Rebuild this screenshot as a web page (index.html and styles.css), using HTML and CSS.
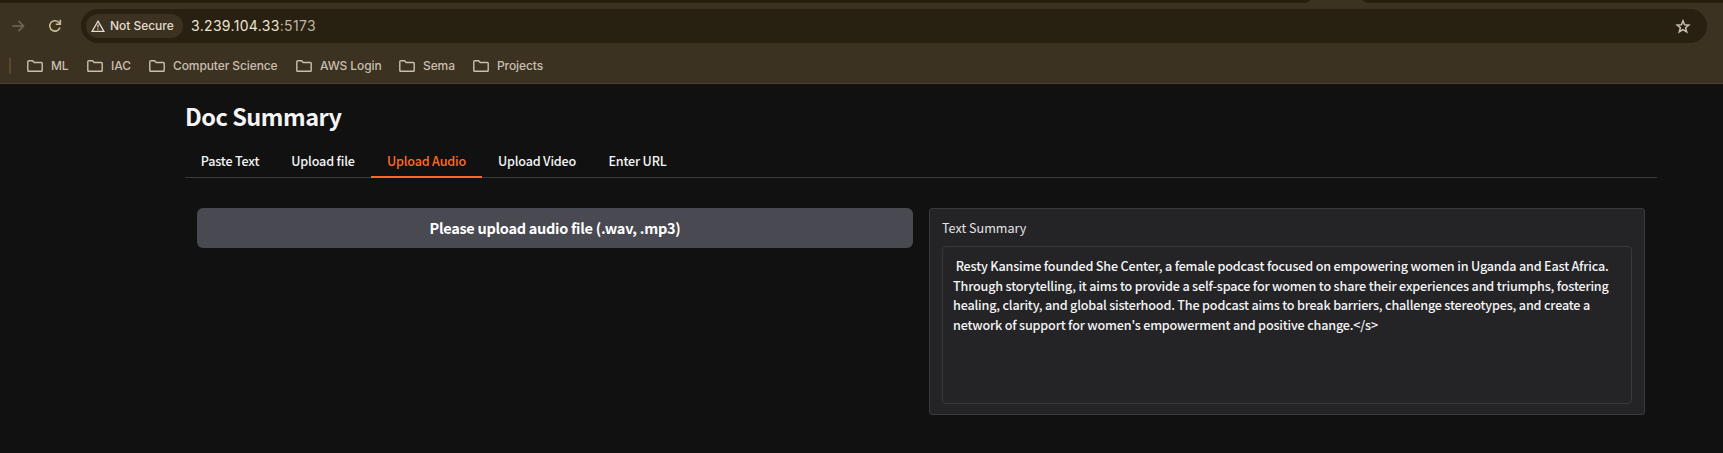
FILE: index.html
```html
<!DOCTYPE html>
<html lang="en">
<head>
<meta charset="utf-8">
<title>Doc Summary</title>
<link rel="stylesheet" href="styles.css">
</head>
<body>
<svg class="defs" width="0" height="0"><defs>
<symbol id="folder" viewBox="0 0 16 12"><path d="M1.4.8h4.2l1.6 1.7h7.2q.8 0 .8.8v7.1q0 .8-.8.8H1.6q-.8 0-.8-.8V1.6q0-.8.8-.8z" fill="none" stroke="currentColor" stroke-width="1.4"/></symbol>
</defs></svg>
<header class="browser">
<div class="tabstrip"><div class="strip left"></div><div class="strip right"></div></div>
<div class="toolbar">
<svg class="forward" width="13" height="12" viewBox="0 0 13 12"><path d="M.3 6h11M6.5.9 11.6 6 6.5 11.1" fill="none" stroke="currentColor" stroke-width="1.5"/></svg>
<svg class="reload" width="14" height="14" viewBox="0 0 14 14"><path d="M11.9 8.4A5.2 5.2 0 1 1 10.6 3.2L12.3 5" fill="none" stroke="currentColor" stroke-width="1.6"/><path d="M12.3.8V5.2H7.8" fill="none" stroke="currentColor" stroke-width="1.6"/></svg>
<div class="address">
<div class="chip"><svg width="14" height="12" viewBox="0 0 14 12"><path d="M7 1.2 12.9 11.3H1.1z" fill="none" stroke="currentColor" stroke-width="1.3"/><path d="M7 4.4v3.2M7 8.5v1.3" stroke="currentColor" stroke-width="1.2"/></svg><span class="t secure">Not Secure</span></div>
<span class="t url">3.239.104.33<span class="port">:5173</span></span>
<svg class="star" width="16" height="15" viewBox="0 0 16 15"><path d="M8 1.8 9.6 5.7 13.8 6 10.6 8.7 11.7 12.9 8 10.6 4.3 12.9 5.4 8.7 2.2 6 6.4 5.7z" fill="none" stroke="currentColor" stroke-width="1.5"/></svg>
</div>
</div>
<nav class="bookmarks">
<i class="divider"></i>
<a class="bm ml"><svg><use href="#folder"/></svg><span>ML</span></a>
<a class="bm iac"><svg><use href="#folder"/></svg><span>IAC</span></a>
<a class="bm cs"><svg><use href="#folder"/></svg><span>Computer Science</span></a>
<a class="bm aws"><svg><use href="#folder"/></svg><span>AWS Login</span></a>
<a class="bm sema"><svg><use href="#folder"/></svg><span>Sema</span></a>
<a class="bm proj"><svg><use href="#folder"/></svg><span>Projects</span></a>
</nav>
</header>
<main class="app">
<h1 class="title">Doc Summary</h1>
<nav class="tabs">
<button class="tab paste">Paste Text</button>
<button class="tab file">Upload file</button>
<button class="tab audio selected">Upload Audio</button>
<button class="tab video">Upload Video</button>
<button class="tab link">Enter URL</button>
</nav>
<section class="row">
<button class="upload"><span>Please upload audio file (.wav, .mp3)</span></button>
<div class="panel">
<label class="label">Text Summary</label>
<div class="output"><p class="line first">&nbsp;Resty Kansime founded She Center, a female podcast focused on empowering women in Uganda and East Africa.</p><p class="line">Through storytelling, it aims to provide a self-space for women to share their experiences and triumphs, fostering</p><p class="line">healing, clarity, and global sisterhood. The podcast aims to break barriers, challenge stereotypes, and create a</p><p class="line">network of support for women's empowerment and positive change.&lt;/s&gt;</p></div>
</div>
</section>
</main>
</body>
</html>
```
FILE: styles.css
```css
* { box-sizing: border-box; }
body { margin: 0; height: 453px; overflow: hidden; background: #111; font-family: "Noto Sans CJK SC", "Noto Sans", sans-serif; color: #f4f4f5; }
.defs { display: block; }
button { border: 0; padding: 0; background: none; font: inherit; color: inherit; }
.browser { height: 84px; background: #3b3222; border-bottom: 1px solid #484033; font-family: Inter, sans-serif; color: #c9bfae; }
.tabstrip { height: 3px; display: flex; justify-content: space-between; }
.strip { background: #281e0e; height: 3px; }
.left { width: 1310px; border-bottom-right-radius: 6px 3px; }
.right { width: 360px; border-bottom-left-radius: 6px 3px; }
.toolbar { display: flex; align-items: center; height: 46px; }
.forward { margin-left: 12px; color: #736956; }
.reload { margin-left: 23px; color: #cdbd96; }
.address { display: flex; align-items: center; width: 1626px; height: 34px; margin-left: 19px; padding: 0 16px 0 5px; border-radius: 17px; background: #282010; }
.chip { display: flex; align-items: center; width: 97px; height: 24px; padding-left: 5px; gap: 5px; border-radius: 12px; background: #3b3222; color: #e5dccb; }
.t { white-space: nowrap; }
.secure { font-size: 12px; font-weight: 500; line-height: 24px; letter-spacing: -0.03px; }
.url { margin-left: 8px; padding-bottom: 1px; font-size: 14px; letter-spacing: 0.33px; color: #ece3d2; }
.port { color: #bfb5a3; }
.star { margin-left: auto; color: #cabfae; }
.bookmarks { display: flex; align-items: center; height: 34px; }
.divider { width: 2px; height: 16px; margin: 0 16px 0 9px; background: #574a2c; }
.bm { display: flex; align-items: center; gap: 8px; font-size: 12px; font-weight: 500; line-height: 16px; letter-spacing: -0.1px; white-space: nowrap; }
.bm svg { width: 16px; height: 12px; }
.ml { width: 60px; } .iac { width: 62px; } .cs { width: 147px; } .aws { width: 103px; } .sema { width: 74px; }
.app { width: 1472px; margin-left: 185px; }
.title { margin: 0; padding-top: 12px; height: 62px; font-size: 23.5px; line-height: 40px; font-weight: 700; letter-spacing: -0.5px; white-space: nowrap; }
.tabs { display: flex; height: 32px; border-bottom: 1px solid #3a3a3c; }
.tab { height: 32px; font-size: 12.6px; font-weight: 500; line-height: 30px; letter-spacing: -0.18px; border-bottom: 2px solid transparent; white-space: nowrap; }
.paste { width: 90px; } .file { width: 96px; } .audio { width: 111px; } .video { width: 110px; } .link { width: 91px; }
.selected { color: #ff6a2a; border-color: #ff6723; }
.row { display: flex; align-items: flex-start; gap: 16px; padding: 30px 12px 0; }
.upload { width: 716px; height: 40px; border-radius: 6px; background: #494951; color: #fff; font-size: 14.5px; line-height: 40px; font-weight: 700; letter-spacing: -0.28px; white-space: nowrap; }
.panel { width: 716px; height: 207px; padding: 9px 12px; border: 1px solid #39393e; border-radius: 3px; background: #242426; }
.label { display: block; height: 28px; font-size: 12.6px; line-height: 20px; color: #e4e4e7; }
.output { height: 158px; padding: 9px 10px; border: 1px solid #39393d; border-radius: 4px; }
.line { margin: 0; height: 19.7px; font-size: 12.6px; line-height: 19.7px; font-weight: 500; letter-spacing: -0.18px; white-space: nowrap; }
```
